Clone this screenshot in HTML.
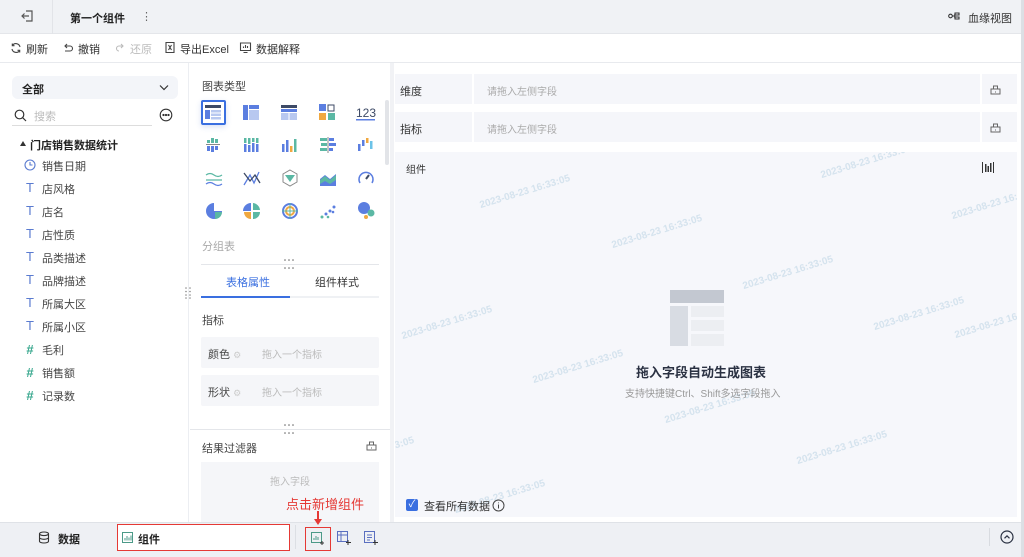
<!DOCTYPE html>
<html style="overflow:hidden"><head><meta charset="utf-8">
<style>
*{margin:0;padding:0;box-sizing:border-box}
body{width:1024px;height:557px;overflow:hidden;font-family:"Liberation Sans","Noto Sans CJK SC",sans-serif;font-size:11px;color:#333;background:#fff;position:relative}
.a{position:absolute}
.top{left:0;top:0;width:1024px;height:34px;background:#f0f2f5;border-bottom:1px solid #e4e6ea}
.tb{left:0;top:34px;width:1024px;height:29px;background:#fff;border-bottom:1px solid #e8eaee}
.tb span{position:absolute;top:7px;font-size:11px;color:#333}
.fld{left:24px;font-size:11px;color:#444}
.fic{left:24px;width:12px;text-align:center;font-size:13px;line-height:13px}
.wm{position:absolute;font-size:10px;font-weight:bold;color:#d5e3ee;transform:translate(-50%,-50%) rotate(-17deg);white-space:nowrap}
</style></head><body>

<div class="a top"></div>
<div class="a" style="left:52px;top:0;width:1px;height:34px;background:#e2e4e8"></div>
<svg class="a" style="left:20px;top:9px" width="14" height="14" viewBox="0 0 14 14" fill="none" stroke="#555" stroke-width="1.2"><path d="M6 2h6v10H6M9 7H2M4.5 4.5 2 7l2.5 2.5"/></svg>
<div class="a" style="left:70px;top:10px;font-size:11px;font-weight:bold;color:#222">第一个组件</div>
<div class="a" style="left:141px;top:10px;font-size:11px;color:#666">⋮</div>
<svg class="a" style="left:948px;top:11px" width="12" height="10" viewBox="0 0 12 10" fill="none" stroke="#333" stroke-width="1.1"><circle cx="2.5" cy="5" r="1.8"/><path d="M4.3 5h2.5M7 2h4v2H7zM7 6h4v2H7zM6.8 3v4"/></svg>
<div class="a" style="left:968px;top:10px;font-size:11px;color:#333">血缘视图</div>

<div class="a tb">
<svg class="a" style="left:10px;top:8px" width="12" height="12" viewBox="0 0 12 12" fill="none" stroke="#444" stroke-width="1.1"><path d="M10 5A4.2 4.2 0 0 0 2.3 3.6M2 7a4.2 4.2 0 0 0 7.7 1.4M2.3 1.5v2.2h2.2M9.7 10.5V8.3H7.5"/></svg>
<span style="left:26px">刷新</span>
<svg class="a" style="left:62px;top:8px" width="12" height="12" viewBox="0 0 12 12" fill="none" stroke="#444" stroke-width="1.1"><path d="M3 4h5a2.5 2.5 0 0 1 0 5H3M5 2 3 4l2 2"/></svg>
<span style="left:78px">撤销</span>
<svg class="a" style="left:114px;top:8px" width="12" height="12" viewBox="0 0 12 12" fill="none" stroke="#bbb" stroke-width="1.1"><path d="M9 4H5a2.5 2.5 0 0 0 0 5M7 2l2 2-2 2"/></svg>
<span style="left:130px;color:#bbb">还原</span>
<svg class="a" style="left:164px;top:7px" width="12" height="13" viewBox="0 0 12 13" fill="none" stroke="#444" stroke-width="1.1"><path d="M2 1.5h8v10H2zM4.5 4l3 5M7.5 4l-3 5"/></svg>
<span style="left:180px">导出Excel</span>
<svg class="a" style="left:239px;top:7px" width="13" height="13" viewBox="0 0 13 13" fill="none" stroke="#444" stroke-width="1.1"><path d="M1.5 2h10v7.5h-10zM4.5 11.5h4M4.5 7V5.5M6.5 7V4M8.5 7V5"/></svg>
<span style="left:256px">数据解释</span>
</div>

<!-- left panel -->
<div class="a" style="left:188px;top:63px;width:1px;height:459px;background:#eceef2"></div>
<div class="a" style="left:12px;top:76px;width:166px;height:23px;background:#f3f5f9;border-radius:6px"></div>
<div class="a" style="left:22px;top:81px;font-weight:bold;font-size:11px;color:#222">全部</div>
<svg class="a" style="left:159px;top:84px" width="10" height="7" viewBox="0 0 10 7" fill="none" stroke="#333" stroke-width="1.2"><path d="M1 1.5 5 5.5 9 1.5"/></svg>
<svg class="a" style="left:14px;top:109px" width="13" height="13" viewBox="0 0 13 13" fill="none" stroke="#333" stroke-width="1.2"><circle cx="5.5" cy="5.5" r="4.3"/><path d="M8.7 8.7 12 12"/></svg>
<div class="a" style="left:34px;top:108px;color:#bbb;font-size:11px">搜索</div>
<div class="a" style="left:12px;top:125px;width:140px;height:1px;background:#ddd"></div>
<svg class="a" style="left:159px;top:108px" width="14" height="14" viewBox="0 0 14 14" fill="none" stroke="#333" stroke-width="1.1"><circle cx="7" cy="7" r="5.8"/><circle cx="4.5" cy="7" r=".6" fill="#333"/><circle cx="7" cy="7" r=".6" fill="#333"/><circle cx="9.5" cy="7" r=".6" fill="#333"/></svg>
<svg class="a" style="left:20px;top:141px" width="6" height="5" viewBox="0 0 6 5"><path d="M0 5 3 0 6 5z" fill="#333"/></svg>
<div class="a" style="left:30px;top:137px;font-weight:bold;color:#222;font-size:11px">门店销售数据统计</div>
<svg class="a" style="left:24px;top:159px" width="12" height="12" viewBox="0 0 12 12" fill="none" stroke="#5a7bd0" stroke-width="1.1"><circle cx="6" cy="6" r="5"/><path d="M6 3v3h2.5"/></svg>
<div class="a fld" style="left:42px;top:158px">销售日期</div>
<svg class="a" width="0" height="0"></svg>
<div class="a fic" style="top:181px;color:#5a7bd0">T</div><div class="a fld" style="left:42px;top:181px">店风格</div>
<div class="a fic" style="top:204px;color:#5a7bd0">T</div><div class="a fld" style="left:42px;top:204px">店名</div>
<div class="a fic" style="top:227px;color:#5a7bd0">T</div><div class="a fld" style="left:42px;top:227px">店性质</div>
<div class="a fic" style="top:250px;color:#5a7bd0">T</div><div class="a fld" style="left:42px;top:250px">品类描述</div>
<div class="a fic" style="top:273px;color:#5a7bd0">T</div><div class="a fld" style="left:42px;top:273px">品牌描述</div>
<div class="a fic" style="top:296px;color:#5a7bd0">T</div><div class="a fld" style="left:42px;top:296px">所属大区</div>
<div class="a fic" style="top:319px;color:#5a7bd0">T</div><div class="a fld" style="left:42px;top:319px">所属小区</div>
<div class="a fic" style="top:343px;color:#3aa88f;font-weight:bold">#</div><div class="a fld" style="left:42px;top:342px">毛利</div>
<div class="a fic" style="top:366px;color:#3aa88f;font-weight:bold">#</div><div class="a fld" style="left:42px;top:365px">销售额</div>
<div class="a fic" style="top:389px;color:#3aa88f;font-weight:bold">#</div><div class="a fld" style="left:42px;top:388px">记录数</div>
<svg class="a" style="left:185px;top:287px" width="6" height="12" viewBox="0 0 6 12" fill="#888"><circle cx="1" cy="1" r=".8"/><circle cx="5" cy="1" r=".8"/><circle cx="1" cy="4.5" r=".8"/><circle cx="5" cy="4.5" r=".8"/><circle cx="1" cy="8" r=".8"/><circle cx="5" cy="8" r=".8"/><circle cx="1" cy="11" r=".8"/><circle cx="5" cy="11" r=".8"/></svg>

<!-- middle -->
<div class="a" style="left:390px;top:63px;width:4px;height:459px;background:#f1f2f5"></div>
<div class="a" style="left:202px;top:78px;font-size:11px;color:#444">图表类型</div>
<div class="a" style="left:385px;top:100px;width:4px;height:65px;background:#e2e4e8;border-radius:2px"></div>
<div class="a" style="left:201px;top:100px;width:25px;height:25px;border:2px solid #3a6fe0;border-radius:2px;box-shadow:0 2px 6px rgba(60,100,200,.2)"></div>
<svg class="a" style="left:196px;top:98px" width="190" height="130" viewBox="0 0 190 130">
<g transform="translate(9,7)"><rect width="16" height="3" fill="#3d4a66"/><rect y="5" width="5" height="9" fill="#5b7ee0"/><rect x="6" y="5" width="10" height="2.5" fill="#b8c8f0"/><rect x="6" y="8.5" width="10" height="2.5" fill="#b8c8f0"/><rect x="6" y="12" width="10" height="2.5" fill="#b8c8f0"/></g>
<g transform="translate(47,7)"><rect width="5" height="15" fill="#5b7ee0"/><rect x="6" width="10" height="4" fill="#5b7ee0"/><rect x="6" y="5" width="10" height="10" fill="#b8c8f0"/></g>
<g transform="translate(85,7)"><rect width="16" height="3" fill="#3d4a66"/><rect y="4" width="16" height="3" fill="#5b7ee0"/><rect y="8" width="7.5" height="7" fill="#b8c8f0"/><rect x="8.5" y="8" width="7.5" height="7" fill="#b8c8f0"/></g>
<g transform="translate(123,6)"><rect width="7" height="7" fill="#5b7ee0"/><rect x="9" y="1" width="6" height="6" fill="none" stroke="#3d4a66"/><rect y="9" width="7" height="7" fill="#f0a840"/><rect x="9" y="9" width="7" height="7" fill="#5bb8a4"/></g>
<text x="160" y="19" font-size="12" fill="#3d4a66" font-family="Liberation Sans">123</text><rect x="160" y="21" width="19" height="1.5" fill="#5b7ee0"/>
<g transform="translate(10,40)"><rect x="5" width="3" height="5" fill="#5bb8a4"/><rect x="1" y="2" width="3" height="3" fill="#5bb8a4"/><rect x="9" y="1" width="3" height="4" fill="#5bb8a4"/><rect y="6" width="14" height="1" fill="#888"/><rect x="1" y="8" width="3" height="5" fill="#5b7ee0"/><rect x="5" y="8" width="3" height="6" fill="#5b7ee0"/><rect x="9" y="8" width="3" height="4" fill="#5b7ee0"/></g>
<g transform="translate(48,40)"><rect width="2.5" height="5" fill="#5bb8a4"/><rect x="4" width="2.5" height="6" fill="#5bb8a4"/><rect x="8" width="2.5" height="4" fill="#5bb8a4"/><rect x="12" width="2.5" height="5" fill="#5bb8a4"/><rect y="6" width="2.5" height="8" fill="#5b7ee0"/><rect x="4" y="7" width="2.5" height="7" fill="#5b7ee0"/><rect x="8" y="5" width="2.5" height="9" fill="#5b7ee0"/><rect x="12" y="6" width="2.5" height="8" fill="#5b7ee0"/></g>
<g transform="translate(86,40)"><rect y="6" width="2.5" height="8" fill="#5b7ee0"/><rect x="4" y="2" width="2.5" height="12" fill="#5b7ee0"/><rect x="8" y="8" width="2.5" height="6" fill="#f0a840"/><rect x="12" y="1" width="2.5" height="13" fill="#5bb8a4"/></g>
<g transform="translate(124,40)"><rect width="7" height="3" fill="#5bb8a4"/><rect x="1" y="5" width="6" height="3" fill="#5bb8a4"/><rect y="10" width="7" height="3" fill="#5bb8a4"/><rect x="7.5" y="-1" width="1" height="16" fill="#888"/><rect x="9" width="5" height="3" fill="#5b7ee0"/><rect x="9" y="5" width="7" height="3" fill="#5b7ee0"/><rect x="9" y="10" width="4" height="3" fill="#5b7ee0"/></g>
<g transform="translate(162,40)"><rect y="6" width="2.5" height="7" fill="#5b7ee0"/><rect x="4" y="2" width="2.5" height="6" fill="#5b7ee0"/><rect x="8" width="2.5" height="5" fill="#f0a840"/><rect x="12" y="3" width="2.5" height="8" fill="#6cc3e8"/></g>
<g transform="translate(10,74)" fill="none" stroke="#5b7ee0" stroke-width="1.2"><path d="M0 3q4-3 8 0t8 0M0 8h16" stroke="#5bb8a4"/><path d="M0 12q4-3 8 0t8 0"/></g>
<g transform="translate(48,73)" fill="none" stroke="#5b7ee0" stroke-width="1.3"><path d="M0 14 6 4l4 8 5-11"/><path d="M0 2l6 8 5-6 5 8" stroke="#3d4a66"/></g>
<g transform="translate(86,72)"><path d="M8 0l7 4v8l-7 4-7-4V4z" fill="none" stroke="#888"/><path d="M3 5h10l-5 7z" fill="#5bb8a4"/></g>
<g transform="translate(124,74)"><path d="M0 14V7l5-4 5 4 6-5v12z" fill="#5b7ee0"/><path d="M0 8l5-4 5 4 6-5v5l-6 4-5-3-5 3z" fill="#5bb8a4"/></g>
<g transform="translate(162,72)" fill="none" stroke="#5b7ee0" stroke-width="1.5"><path d="M2 13A7 7 0 1 1 14 13"/><path d="M8 9l3-4" stroke="#3d4a66" stroke-width="2"/></g>
<g transform="translate(10,105)"><path d="M8 0a8 8 0 1 0 8 8H8z" fill="#5b7ee0"/><path d="M9 9h7a7 7 0 0 1-7 7z" fill="#5bb8a4"/></g>
<g transform="translate(48,105)"><path d="M7 0v8H-1a8 8 0 0 1 8-8z" fill="#5b7ee0"/><path d="M9 0a8 8 0 0 1 7 7H9z" fill="#5bb8a4"/><path d="M7 9v7a7 7 0 0 1-7-7z" fill="#f0a840"/><path d="M9 9h7a7 7 0 0 1-7 7z" fill="#5bb8a4"/></g>
<g transform="translate(86,105)" fill="none" stroke-width="2"><circle cx="8" cy="8" r="7" stroke="#5b7ee0"/><circle cx="8" cy="8" r="4" stroke="#f0a840"/><path d="M8 0v16M0 8h16" stroke="#5bb8a4" stroke-width="1"/></g>
<g transform="translate(124,106)" fill="#5b7ee0"><circle cx="2" cy="13" r="1.5" fill="#5bb8a4"/><circle cx="6" cy="10" r="1.5"/><circle cx="10" cy="7" r="1.5"/><circle cx="14" cy="3" r="1.5"/><circle cx="8" cy="13" r="1.3" fill="#5bb8a4"/><circle cx="13" cy="8" r="1.3"/></g>
<g transform="translate(162,104)"><circle cx="6" cy="6" r="6" fill="#5b7ee0"/><circle cx="13" cy="11" r="3.5" fill="#5bb8a4"/><circle cx="8" cy="15" r="2" fill="#f0a840"/></g>
</svg>
<div class="a" style="left:202px;top:238px;font-size:11px;color:#aaa">分组表</div>
<div class="a" style="left:201px;top:264px;width:178px;height:1px;background:#e4e6ea"></div>
<svg class="a" style="left:284px;top:259px" width="10" height="11" viewBox="0 0 10 11" fill="#666"><circle cx="1" cy="1" r=".8"/><circle cx="5" cy="1" r=".8"/><circle cx="9" cy="1" r=".8"/><circle cx="1" cy="9" r=".8"/><circle cx="5" cy="9" r=".8"/><circle cx="9" cy="9" r=".8"/></svg>
<div class="a" style="left:226px;top:274px;font-size:11px;color:#3a6fe0">表格属性</div>
<div class="a" style="left:315px;top:274px;font-size:11px;color:#333">组件样式</div>
<div class="a" style="left:201px;top:296px;width:178px;height:2px;background:#eff1f4"></div>
<div class="a" style="left:201px;top:296px;width:89px;height:2px;background:#3a6fe0"></div>
<div class="a" style="left:202px;top:312px;font-size:11px;color:#444">指标</div>
<div class="a" style="left:201px;top:337px;width:178px;height:31px;background:#f5f6f9;border-radius:2px"></div>
<div class="a" style="left:208px;top:346px;font-size:11px;color:#444">颜色 <span style="color:#ccc;font-size:9px">⚙</span></div>
<div class="a" style="left:262px;top:346px;font-size:10px;color:#bbb">拖入一个指标</div>
<div class="a" style="left:201px;top:375px;width:178px;height:31px;background:#f5f6f9;border-radius:2px"></div>
<div class="a" style="left:208px;top:384px;font-size:11px;color:#444">形状 <span style="color:#ccc;font-size:9px">⚙</span></div>
<div class="a" style="left:262px;top:384px;font-size:10px;color:#bbb">拖入一个指标</div>
<div class="a" style="left:190px;top:429px;width:200px;height:1px;background:#e4e6ea"></div>
<svg class="a" style="left:284px;top:424px" width="10" height="11" viewBox="0 0 10 11" fill="#666"><circle cx="1" cy="1" r=".8"/><circle cx="5" cy="1" r=".8"/><circle cx="9" cy="1" r=".8"/><circle cx="1" cy="9" r=".8"/><circle cx="5" cy="9" r=".8"/><circle cx="9" cy="9" r=".8"/></svg>
<div class="a" style="left:202px;top:440px;font-size:11px;color:#444">结果过滤器</div>
<svg class="a" style="left:366px;top:440px" width="11" height="11" viewBox="0 0 11 11" fill="none" stroke="#666"><path d="M1 5h9v5H1zM3.5 5V2h4v3M5.5 7.5v1"/></svg>
<div class="a" style="left:201px;top:462px;width:178px;height:60px;background:#f5f6f9"></div>
<div class="a" style="left:270px;top:473px;font-size:10px;color:#bbb">拖入字段</div>

<!-- right -->
<div class="a" style="left:395px;top:74px;width:622px;height:30px;background:#f5f6fa"></div>
<div class="a" style="left:472px;top:74px;width:2px;height:30px;background:#fff"></div>
<div class="a" style="left:980px;top:74px;width:2px;height:30px;background:#fff"></div>
<div class="a" style="left:400px;top:83px;font-size:11px;color:#333">维度</div>
<div class="a" style="left:487px;top:83px;font-size:10px;color:#aaa">请拖入左侧字段</div>
<div class="a" style="left:395px;top:112px;width:622px;height:30px;background:#f5f6fa"></div>
<div class="a" style="left:472px;top:112px;width:2px;height:30px;background:#fff"></div>
<div class="a" style="left:980px;top:112px;width:2px;height:30px;background:#fff"></div>
<div class="a" style="left:400px;top:121px;font-size:11px;color:#333">指标</div>
<div class="a" style="left:487px;top:121px;font-size:10px;color:#aaa">请拖入左侧字段</div>
<svg class="a" style="left:990px;top:84px" width="11" height="11" viewBox="0 0 11 11" fill="none" stroke="#666"><path d="M1 5h9v5H1zM3.5 5V2h4v3M5.5 7.5v1"/></svg>
<svg class="a" style="left:990px;top:122px" width="11" height="11" viewBox="0 0 11 11" fill="none" stroke="#666"><path d="M1 5h9v5H1zM3.5 5V2h4v3M5.5 7.5v1"/></svg>
<div class="a" style="left:395px;top:152px;width:622px;height:365px;background:#f6f7fb;overflow:hidden">
<div class="wm" style="left:130px;top:40px">2023-08-23 16:33:05</div>
<div class="wm" style="left:262px;top:80px">2023-08-23 16:33:05</div>
<div class="wm" style="left:393px;top:121px">2023-08-23 16:33:05</div>
<div class="wm" style="left:524px;top:162px">2023-08-23 16:33:05</div>
<div class="wm" style="left:52px;top:171px">2023-08-23 16:33:05</div>
<div class="wm" style="left:183px;top:215px">2023-08-23 16:33:05</div>
<div class="wm" style="left:315px;top:255px">2023-08-23 16:33:05</div>
<div class="wm" style="left:447px;top:296px">2023-08-23 16:33:05</div>
<div class="wm" style="left:471px;top:10px">2023-08-23 16:33:05</div>
<div class="wm" style="left:602px;top:51px">2023-08-23 16:33:05</div>
<div class="wm" style="left:605px;top:170px">2023-08-23 16:33:05</div>
<div class="wm" style="left:-26px;top:302px">2023-08-23 16:33:05</div>
<div class="wm" style="left:105px;top:345px">2023-08-23 16:33:05</div>
</div>
<div class="a" style="left:406px;top:161px;font-size:10px;color:#333">组件</div>
<svg class="a" style="left:982px;top:162px" width="12" height="11" viewBox="0 0 12 11" fill="#333"><rect x="0" y="0" width="1" height="11"/><rect x="11" y="0" width="1" height="11"/><rect x="3" y="2" width="1.5" height="8"/><rect x="5.5" y="4" width="1.5" height="6"/><rect x="8" y="1" width="1.5" height="9"/></svg>
<div class="a" style="left:670px;top:290px;width:54px;height:13px;background:#c3c8d1"></div>
<div class="a" style="left:670px;top:306px;width:18px;height:40px;background:#d8dce3"></div>
<div class="a" style="left:691px;top:306px;width:33px;height:11px;background:#eceef2"></div>
<div class="a" style="left:691px;top:320px;width:33px;height:11px;background:#eceef2"></div>
<div class="a" style="left:691px;top:334px;width:33px;height:12px;background:#eceef2"></div>
<div class="a" style="left:636px;top:362px;font-size:13px;font-weight:bold;color:#2a3142">拖入字段自动生成图表</div>
<div class="a" style="left:625px;top:385px;font-size:10px;color:#999">支持快捷键Ctrl、Shift多选字段拖入</div>
<div class="a" style="left:406px;top:499px;width:12px;height:12px;background:#3a6fe0;border-radius:2px;color:#fff;font-size:10px;line-height:12px;text-align:center">✓</div>
<div class="a" style="left:424px;top:498px;font-size:11px;color:#333">查看所有数据</div>
<svg class="a" style="left:492px;top:499px" width="13" height="13" viewBox="0 0 13 13" fill="none" stroke="#444"><circle cx="6.5" cy="6.5" r="5.5"/><path d="M6.5 5.5v4M6.5 3.5v.8"/></svg>

<!-- bottom -->
<div class="a" style="left:0;top:522px;width:1024px;height:35px;background:#eef0f4;border-top:1px solid #dfe2e7"></div>
<svg class="a" style="left:38px;top:531px" width="12" height="13" viewBox="0 0 12 13" fill="none" stroke="#333" stroke-width="1.1"><ellipse cx="6" cy="2.8" rx="4.5" ry="1.8"/><path d="M1.5 2.8v7.4c0 1 2 1.8 4.5 1.8s4.5-.8 4.5-1.8V2.8M1.5 6.5c0 1 2 1.8 4.5 1.8s4.5-.8 4.5-1.8"/></svg>
<div class="a" style="left:58px;top:531px;font-size:11px;font-weight:bold;color:#222">数据</div>
<div class="a" style="left:117px;top:524px;width:173px;height:27px;background:#fff;border:1.5px solid #e53935"></div>
<svg class="a" style="left:122px;top:532px" width="11" height="11" viewBox="0 0 11 11" fill="none" stroke="#4b9a88"><rect x=".5" y=".5" width="10" height="10"/><path d="M3 8.5V6M5 8.5V4M7 8.5V5.5M9 8.5V3.5" stroke-width="1"/></svg>
<div class="a" style="left:138px;top:531px;font-size:11px;font-weight:bold;color:#222">组件</div>
<div class="a" style="left:295px;top:525px;width:1px;height:24px;background:#dcdfe4"></div>
<div class="a" style="left:305px;top:527px;width:26px;height:24px;border:1.5px solid #e53935"></div>
<svg class="a" style="left:311px;top:532px" width="14" height="13" viewBox="0 0 14 13" fill="none" stroke="#4b9a88"><rect x=".5" y=".5" width="10" height="10"/><path d="M3 8V6M5 8V4M7 8V5"/><path d="M11 9v4M9 11h4" stroke="#333"/></svg>
<svg class="a" style="left:337px;top:531px" width="14" height="14" viewBox="0 0 14 14" fill="none" stroke="#5a6fc0"><rect x=".5" y=".5" width="10" height="10"/><path d="M.5 4h10M4 .5v10"/><path d="M11 9v5M9 11.5h5" stroke="#333"/></svg>
<svg class="a" style="left:364px;top:531px" width="14" height="14" viewBox="0 0 14 14" fill="none" stroke="#5a6fc0"><rect x=".5" y=".5" width="10" height="11"/><path d="M3 4h5M3 6.5h5M3 9h3"/><path d="M11 9v5M9 11.5h5" stroke="#333"/></svg>
<div class="a" style="left:286px;top:494px;font-size:13px;color:#e53935">点击新增组件</div>
<div class="a" style="left:317px;top:511px;width:1.5px;height:11px;background:#e53935"></div>
<div class="a" style="left:314px;top:519px;width:0;height:0;border-left:4px solid transparent;border-right:4px solid transparent;border-top:6px solid #e53935"></div>
<div class="a" style="left:989px;top:528px;width:1px;height:18px;background:#d8dbe0"></div>
<svg class="a" style="left:1000px;top:530px" width="14" height="14" viewBox="0 0 14 14" fill="none" stroke="#2a3142" stroke-width="1.2"><circle cx="7" cy="7" r="6"/><path d="M4.5 8.3 7 5.8l2.5 2.5"/></svg>
<div class="a" style="left:1021px;top:0;width:3px;height:557px;background:#dcdfe4"></div>
</body></html>
